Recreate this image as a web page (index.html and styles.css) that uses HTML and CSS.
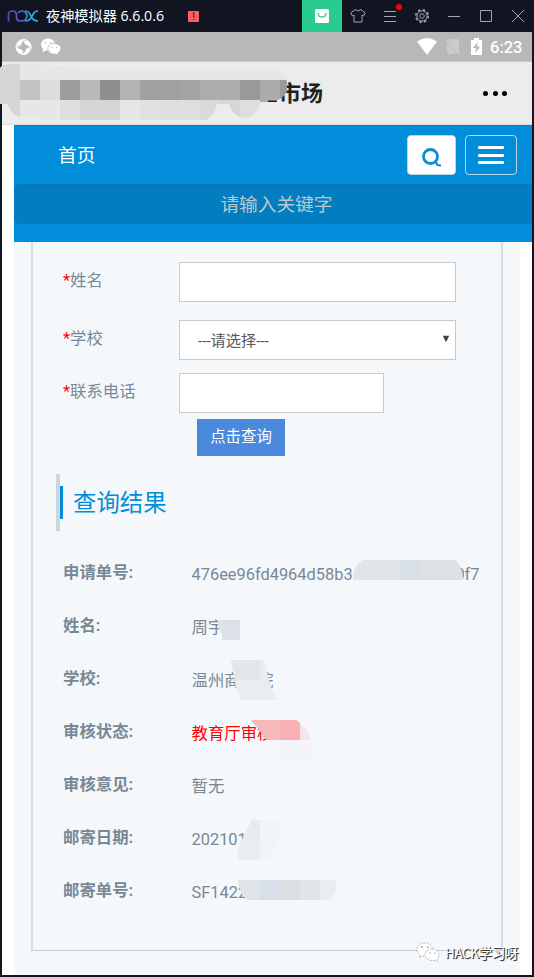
FILE: index.html
```html
<!DOCTYPE html>
<html lang="zh-CN">
<head>
<meta charset="utf-8">
<title>夜神模拟器 6.6.0.6</title>
<link rel="stylesheet" href="styles.css">
</head>
<body>
<div class="window">
  <header class="titlebar">
    <svg class="nox" viewBox="0 0 32 14"><defs><linearGradient id="g" gradientUnits="userSpaceOnUse" x1="0" y1="0" x2="32" y2="0"><stop stop-color="#7138c5"/><stop offset=".55" stop-color="#4971d5"/><stop offset=".75" stop-color="#25a9dc"/><stop offset="1" stop-color="#18c3ed"/></linearGradient></defs><g fill="none" stroke="url(#g)" stroke-width="1.7"><path d="M1.500 12.500V6Q1.500 2 5.500 2T9.500 6V8Q9.500 12 13 12H15A5 5 0 1 0 11 4M18 2Q21 2 22.500 4.500L25 9Q27 12 31 12M31 2Q28 2 26.500 4.500L24 9Q22 12 18 12"/></g></svg>
    <span class="appname">夜神模拟器 6.6.0.6</span>
    <span class="alert">!</span>
    <div class="tools">
      <span class="tool shop"><svg viewBox="0 0 14 14"><rect width="14" height="14" rx="1.5" fill="#fff"/><path d="M3 4Q3 8 7 8T11 4" fill="none" stroke="#2acb91" stroke-width="1.3"/></svg></span>
      <span class="tool shirt"><svg viewBox="0 0 16 14"><path d="M5 .7Q8 3 11 .7L15.3 4 13.5 7 12 6V13H4V6L2.500 7 .7 4Z"/></svg></span>
      <span class="tool menu"><svg viewBox="0 0 12 12"><path d="M0 1.500H12M0 6.500H12M0 11.500H12"/></svg><i></i></span>
      <span class="tool"><svg viewBox="0 0 16 16"><circle cx="8" cy="8" r="2.300"/><circle cx="8" cy="8" r="5.100"/><circle cx="8" cy="8" r="6.300" stroke-width="1.500" stroke-dasharray="2.500 2.450"/></svg></span>
      <span class="tool"><svg viewBox="0 0 12 12"><path d="M0 6.500H12"/></svg></span>
      <span class="tool"><svg viewBox="0 0 12 12"><path d="M.5 .5H11.500V11.500H.5Z"/></svg></span>
      <span class="tool"><svg viewBox="0 0 12 12"><path d="M0 0L12 12M12 0L0 12"/></svg></span>
    </div>
  </header>

  <main class="screen">
    <div class="status">
      <svg class="swirl" viewBox="0 0 18 18"><g fill="#fff"><path id="blade" d="M2.500 4Q7-.5 12 1.200Q7 2.500 6.500 6.500L3.500 9Q1.500 7 2.500 4Z"/><path d="M14 2.500Q18.500 7 16.800 12Q15.500 7 11.500 6.500L9 3.500Q11 1.500 14 2.500Z"/><path d="M15.500 14Q11 18.500 6 16.800Q11 15.500 11.500 11.500L14.500 9Q16.500 11 15.500 14Z"/><path d="M4 15.500Q-.5 11 1.200 6Q2.500 11 6.500 11.500L9 14.500Q7 16.500 4 15.500Z"/></g><circle cx="9" cy="9" r="8" fill="none" stroke="#fff" stroke-width=".9"/></svg>
      <svg class="wechat" viewBox="0 0 20 17"><ellipse cx="7" cy="6.500" rx="7" ry="6"/><path d="M2 10L1.500 14 6 12Z"/><g stroke="#b8b8b8" stroke-width=".8"><path d="M13 5.500C9 5.500 6.900 8 6.900 10.700S9.200 16 13 16L17 16.500 17.500 14.500C23 10 18 5.500 13 5.500Z"/></g><g fill="#b8b8b8"><circle cx="4.500" cy="4.800" r=".8"/><circle cx="9.500" cy="4.800" r=".8"/><circle cx="11" cy="9.300" r=".7"/><circle cx="15.500" cy="9.300" r=".7"/></g></svg>
      <div class="system">
        <svg class="wifi" viewBox="0 0 20 17"><path d="M0 3.500Q10-3.500 20 3.500L10 17Z" fill="#fff"/></svg>
        <svg class="sim" viewBox="0 0 16 17"><path d="M5 1H12Q14 1 14 3V14L3 3ZM2 5L13 16H4Q2 16 2 14Z" fill="#cbcbcb"/><path d="M.5 1.500L15 16" stroke="#e0e0e0" stroke-width="1"/></svg>
        <svg class="battery" viewBox="0 0 11 17"><path d="M3 0H8V2H11V17H0V2H3Z" fill="#fff"/><path d="M6.700 4L2 10H5L4.500 15 9 8.500H6Z" fill="#b8b8b8"/></svg>
        <span>6:23</span>
      </div>
    </div>
    <div class="heading"><h1>市场</h1><div class="more"><i></i><i></i><i></i></div></div>

    <div class="page">
      <nav class="hero">
        <div class="navrow">
          <a>首页</a>
          <button class="search"><svg viewBox="0 0 20 20"><circle cx="8.500" cy="8.500" r="7" fill="none" stroke="#0a8dd6" stroke-width="2.800"/><path d="M13.500 13.500L15.500 17 19 17.500" fill="none" stroke="#0a8dd6" stroke-width="2.200"/></svg></button>
          <button class="burger"><i></i><i></i><i></i></button>
        </div>
        <div class="keyword">请输入关键字</div>
      </nav>
      <section class="body">
        <div class="panel">
          <form>
            <div class="field name"><label><b>*</b>姓名</label><div class="box"></div></div>
            <div class="field school"><label><b>*</b>学校</label><div class="box select"><span>---请选择---</span><svg viewBox="0 0 8 8"><path d="M.8 .8H7.200L4 7.200Z" fill="#444"/></svg></div></div>
            <div class="field phone"><label><b>*</b>联系电话</label><div class="box short"></div></div>
            <div class="submit">点击查询</div>
          </form>
          <div class="result-title"><h2>查询结果</h2></div>
          <dl>
            <div><dt>申请单号:</dt><dd class="code"><span>476ee96fd4964d58b3</span><span>0f7</span></dd></div>
            <div><dt>姓名:</dt><dd>周宇</dd></div>
            <div><dt>学校:</dt><dd>温州商学院</dd></div>
            <div><dt>审核状态:</dt><dd class="state">教育厅审核</dd></div>
            <div><dt>审核意见:</dt><dd>暂无</dd></div>
            <div><dt>邮寄日期:</dt><dd>202101</dd></div>
            <div><dt>邮寄单号:</dt><dd>SF1422</dd></div>
          </dl>
        </div>
      </section>
    </div>
  </main>

  <svg class="masks" viewBox="0 0 534 977">
    <defs>
      <clipPath id="c0"><path d="M0 68Q3 64 10 64H35L95 69H265Q287 70 287 83V91Q283 101 268 102H262Q254 118 246 118Q234 118 229 104H217Q213 120 203 120H38L32 117H20Q12 115 7 104H0Z"/></clipPath>
      <clipPath id="c1"><path d="M353 580Q353 565 363 560H455Q462 565 463 580Z"/></clipPath>
      <clipPath id="c2"><path d="M218 620Q220 609 238 608L252 620 256 640H222V634Q217 629 218 620Z"/></clipPath>
      <clipPath id="c3"><path d="M231 660H264L271 687 277 700H241L236 687Z"/></clipPath>
      <clipPath id="c4"><path d="M251 720H296Q308 728 311 740V760H278V749L267 740Z"/></clipPath>
      <clipPath id="c5"><path d="M252 820H280V837L270 860H238V850L244 835Z"/></clipPath>
      <clipPath id="c6"><path d="M238 880H335Q339 892 330 900H248Q239 895 238 880Z"/></clipPath>
    </defs>
    <g clip-path="url(#c0)" shape-rendering="crispEdges">
      <path fill="#e7e7e8" d="M0 60H290V122H0Z"/><path fill="#d3d5d7" d="M0 60H20V122H0Z"/>
      <path fill="#c2c2c2" d="M20 80h20v20H20Z"/><path fill="#dddddd" d="M40 80h20v20H40Z"/><path fill="#9c9c9c" d="M60 80h20v20H60Z"/><path fill="#bababa" d="M80 80h20v20H80Z"/><path fill="#8f8f8f" d="M100 80h20v20h-20Z"/><path fill="#b3b3b3" d="M120 80h20v20h-20Z"/><path fill="#a0a0a0" d="M140 80h40v20h-40Z"/><path fill="#a4a4a4" d="M180 80h20v20h-20Z"/><path fill="#adadad" d="M200 80h40v20h-40Z"/><path fill="#999" d="M240 80h20v20h-20Z"/><path fill="#ababab" d="M260 80h20v22h-20Z"/><path fill="#999" d="M280 80h8v22h-8Z"/>
      <path fill="#dedede" d="M60 100h20v20H60ZM160 100h40v20h-40ZM240 100h20v20h-20Z"/><path fill="#d6d6d6" d="M80 100h40v20H80ZM220 100h20v20h-20Z"/><path fill="#e1e1e1" d="M140 100h20v20h-20Z"/><path fill="#dadada" d="M200 100h20v20h-20Z"/>
    </g>
    <path fill="#222" d="M268 100.500H277V102H268Z"/>
    <g clip-path="url(#c1)" shape-rendering="crispEdges"><path fill="#e0e5e8" d="M350 560H465V580H350Z"/><path fill="#d9dfe7" d="M400 560h20v20h-20Z"/><path fill="#dce1e4" d="M420 560h45v20h-45Z"/></g>
    <g clip-path="url(#c2)"><path fill="#f3f7fa" d="M215 605H258V642H215Z"/><path fill="#dde3e7" d="M215 620h7v20h-7Z"/><path fill="#dbe0e9" d="M222 620h18v20h-18Z"/></g>
    <g clip-path="url(#c3)"><path fill="#e8edf0" d="M230 660h50v40h-50Z"/><path fill="#e2e7ea" d="M230 660h30v20h-30Z"/></g>
    <g clip-path="url(#c4)"><path fill="#f4f5f8" d="M250 740h62v20h-62Z"/><path fill="#f7b9bc" d="M250 720h50v20h-50Z"/><path fill="#f7b0b4" d="M280 720h20v20h-20Z"/><path fill="#f6e5e8" d="M300 720h12v20h-12Z"/></g>
    <g clip-path="url(#c5)"><path fill="#f1f5f8" d="M238 820h42v40h-42Z"/><path fill="#e7ebf0" d="M238 820h22v20h-22Z"/><path fill="#eaeef1" d="M238 840h22v20h-22Z"/></g>
    <g clip-path="url(#c6)"><path fill="#dee4e7" d="M238 880h22v20h-22Z"/><path fill="#d9dfe8" d="M260 880h20v20h-20Z"/><path fill="#dadfe3" d="M280 880h20v20h-20Z"/><path fill="#e0e5e9" d="M300 880h20v20h-20Z"/><path fill="#e9eef1" d="M320 880h20v20h-20Z"/></g>
  </svg>
  <div class="watermark"><svg viewBox="0 0 24 20"><g fill="#fff" stroke="#8e9297" stroke-width=".6" stroke-dasharray="2 1"><path d="M9 1C4 1 1 4 1 7.500Q1 11 4 13L3 15.500 6.500 14H11C20 10 17 1 9 1Z"/><path d="M16 7C12 7 9 9.500 9 12.500S12 18.500 16 18.500H19L21.500 20 21 17.500Q23 15.500 23 13C23 9.500 20 7 16 7Z"/></g><g fill="#555"><circle cx="6" cy="5" r=".7"/><circle cx="12" cy="5" r=".7"/><circle cx="14" cy="11" r=".6"/><circle cx="19" cy="11" r=".6"/></g></svg><span>HACK学习呀</span></div>
</div>
</body>
</html>
```
FILE: styles.css
```css
* { box-sizing: border-box; }
body { margin: 0; font-family: Roboto, "Noto Sans CJK SC", sans-serif; }
h1, h2, dl, dd { margin: 0; font-weight: 400; }
.window { position: relative; width: 534px; height: 977px; background: #111521; overflow: hidden; }

.titlebar { height: 32px; display: flex; align-items: center; padding-left: 7px; color: #fff; }
.nox { width: 32px; height: 14px; }
.appname { margin-left: 7px; width: 117px; white-space: nowrap; font: 14.2px/20px "Open Sans", "Noto Sans CJK SC", sans-serif; letter-spacing: -.02px; }
.alert { margin-left: 25px; width: 11px; height: 11px; border-radius: 1px; background: #ff5d62; color: #111521; font-size: 10px; line-height: 11px; text-align: center; }
.tools { margin-left: auto; display: flex; }
.tool { position: relative; width: 32px; height: 32px; display: flex; align-items: center; justify-content: center; }
.tool svg { width: 12px; height: 12px; fill: none; stroke: #a4a6ad; stroke-width: 1; }
.tool.shop { width: 40px; background: #2acb91; }
.tool.shop svg { width: 14px; height: 14px; stroke: none; }
.tool.shirt svg { width: 16px; height: 14px; }
.tool:nth-child(4) svg { width: 16px; height: 16px; }
.menu i { position: absolute; top: 4px; right: 4px; width: 6px; height: 6px; border-radius: 50%; background: #f00; }

.screen { margin: 0 2px; height: 943px; background: #fff; }
.status { height: 30px; display: flex; align-items: center; padding: 0 9.500px 0 13px; background: #b8b8b8; border-bottom: 1px solid #c9c9c9; }
.swirl { width: 17px; height: 18px; }
.wechat { width: 20px; height: 17px; margin-left: 9px; fill: #fff; }
.system { margin-left: auto; display: flex; align-items: center; color: #fff; font-size: 16.500px; }
.wifi { width: 20px; height: 17px; }
.sim { width: 16px; height: 17px; margin-left: 8px; }
.battery { width: 11px; height: 17px; margin: 0 8.500px 0 10px; }
.system span { font-weight: 500; position: relative; top: 1px; }
.heading { height: 63px; display: flex; align-items: center; justify-content: space-between; padding: 0 25px 0 277px; background: #ececec; border-bottom: 1px solid #ddd; }
.heading h1 { font: 700 22px/30px "Noto Sans CJK SC", sans-serif; color: #222; padding-bottom: 4px; }
.more { display: flex; gap: 4.300px; }
.more i { width: 5px; height: 5px; border-radius: 50%; background: #000; }

.page { margin-left: 12px; }
.hero { height: 117px; background: #018dd9; border-top: 1px solid #0b80c2; }
.navrow { height: 58px; display: flex; align-items: center; padding: 0 15px 0 44px; }
.navrow a { margin-right: auto; padding-top: 1px; color: #fff; font-size: 18.700px; line-height: 26px; }
.navrow button { height: 40px; padding: 0; border: 1px solid #b9d6e9; border-radius: 4px; display: flex; align-items: center; justify-content: center; }
.navrow .search { width: 49px; background: #fff; margin-right: 9px; }
.search svg { width: 20px; height: 20px; margin-top: 5px; }
.navrow .burger { width: 52px; background: none; flex-direction: column; gap: 4.200px; }
.burger i { width: 26px; height: 3px; border-radius: 1px; background: #fff; }
.keyword { height: 40px; border-radius: 6px 0 0 6px; border-top: 1px solid #0275b4; background: #027dc0; color: #bdc7cd; font-size: 18.700px; line-height: 40px; padding-left: 7px; text-align: center; }

.body { width: 506px; height: 733px; background: #f4f8fb; padding: 0 17px; }
.panel { height: 709px; border: solid #d9dcde; border-width: 0 2px 1px; border-bottom-color: #c9cbcd; padding-left: 23px; color: #788896; }
form { height: 232px; padding-top: 20px; }
.field { display: flex; height: 40px; }
.field.school { margin-top: 18px; }
.field.phone { margin-top: 13px; }
.field label { width: 123px; padding-left: 7px; font-size: 16.400px; line-height: 37px; white-space: nowrap; }
.field label b { color: #f00; font-weight: 400; }
.box { width: 277px; height: 40px; border: 1px solid #c9cacc; background: #fff; }
.box.short { width: 205px; }
.select { display: flex; align-items: center; justify-content: space-between; padding: 0 5px 2px 18px; color: #555; font-size: 15.200px; }
.select svg { width: 8px; height: 8px; }
.submit { margin: 6px 0 0 141px; width: 88px; height: 37px; background: #4a89dc; color: #fff; font-size: 15.400px; line-height: 36px; text-align: center; }
.result-title { height: 57px; display: flex; align-items: center; border-left: 4px solid #c9d7e3; }
.result-title h2 { height: 33px; padding-left: 10px; border-left: 3px solid #018dd9; color: #018dd9; font-size: 23.400px; line-height: 34px; }
dl { padding: 15px 0 0 7px; }
dl > div { height: 53px; display: flex; }
dt { width: 128.500px; font-size: 16.400px; line-height: 53px; font-weight: 700; }
dd { font-size: 16.400px; line-height: 57px; white-space: nowrap; }
.code { width: 288px; display: flex; justify-content: space-between; }
dd.state { color: #f00; }

.masks { position: absolute; left: 0; top: 0; width: 534px; height: 977px; pointer-events: none; }
.watermark { position: absolute; left: 416px; top: 942px; display: flex; align-items: center; color: #fff; font: 13.500px/20px "Noto Sans CJK SC", sans-serif; letter-spacing: -.4px; text-shadow: 1px 1px 1px #333, 1px 1px 0 #666; white-space: nowrap; }
.watermark svg { width: 24px; height: 20px; margin-right: 5px; }
```
